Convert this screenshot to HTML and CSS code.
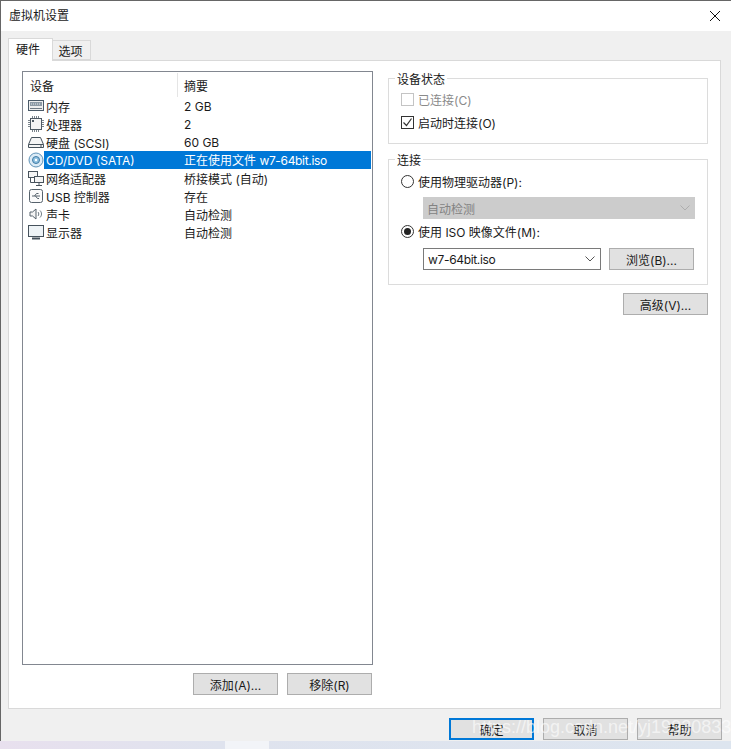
FILE: index.html
```html
<!DOCTYPE html>
<html lang="zh-CN">
<head>
<meta charset="utf-8">
<title>虚拟机设置</title>
<link rel="stylesheet" href="styles.css">
</head>
<body>
<div class="window">
  <header class="titlebar">
    <span class="title">虚拟机设置</span>
    <svg class="close" width="12" height="12" viewBox="0 0 12 12"><path d="M1 1l10 10M11 1L1 11" stroke="#111" stroke-width="1" fill="none"/></svg>
  </header>
  <main class="body">
    <div class="tabs">
      <div class="tab active">硬件</div>
      <div class="tab">选项</div>
    </div>
    <div class="panel">
      <section class="left">
        <div class="tree">
          <div class="tree-head">
            <div class="col-a">设备</div>
            <div class="col-b">摘要</div>
          </div>
          <div class="row">
            <svg class="ico" viewBox="0 0 16 16"><rect x=".5" y="2.500" width="15" height="10" fill="#eeeeee" stroke="#4a5a68"/><rect x="2" y="4" width="12" height="4" fill="#8d9aa5"/><path d="M3 6h10" stroke="#e4e8ec" stroke-dasharray="1 1"/><path d="M2 10.500h12" stroke="#6f7a84"/></svg>
            <div class="name">内存</div><div class="sum">2 GB</div>
          </div>
          <div class="row">
            <svg class="ico" viewBox="0 0 16 16"><path d="M0 4.500h16M0 6.500h16M0 8.500h16M0 10.500h16M4.500 0v16M6.500 0v16M8.500 0v16M10.500 0v16" stroke="#7b858d"/><rect x="2.500" y="2.500" width="11" height="11" fill="#f4f4f4" stroke="#4f5a64"/><rect x="4" y="4" width="2" height="2" fill="#4f5a64"/></svg>
            <div class="name">处理器</div><div class="sum">2</div>
          </div>
          <div class="row">
            <svg class="ico" viewBox="0 0 16 16"><path d="M3.500 3.500h9l3 7v3H.5v-3z" fill="#f5f5f5" stroke="#46525c"/><path d="M.5 10.500h15M12 12h2" stroke="#46525c"/></svg>
            <div class="name">硬盘 (SCSI)</div><div class="sum">60 GB</div>
          </div>
          <div class="row">
            <svg class="ico" viewBox="0 0 16 16"><circle cx="8" cy="8" r="7" fill="#dcebf6" stroke="#5f93b8"/><circle cx="8" cy="8" r="3.500" fill="#8fc0e0" stroke="#3f7ba5"/><circle cx="8" cy="8" r="1.200" fill="#fff"/></svg>
            <div class="selected"><div class="name">CD/DVD (SATA)</div><div class="sum">正在使用文件 <span class="iso">w7-64bit.iso</span></div></div>
          </div>
          <div class="row">
            <svg class="ico" viewBox="0 0 16 16"><rect x=".5" y="1.500" width="9" height="6" fill="#f3f3f3" stroke="#47525c"/><rect x="6.500" y="6.500" width="9" height="6" fill="#f3f3f3" stroke="#47525c"/><path d="M11 12.500v3M8 15.500h6M2.500 8v4.500h4" stroke="#47525c" fill="none"/></svg>
            <div class="name">网络适配器</div><div class="sum">桥接模式 (自动)</div>
          </div>
          <div class="row">
            <svg class="ico" viewBox="0 0 16 16"><rect x="1.500" y="1.500" width="13" height="13" rx="2" fill="#fbfbfb" stroke="#56626c"/><path d="M4 8h8M6.500 8l2-2.500h2M7.500 8l2 2.500h1.500" stroke="#56626c" fill="none"/></svg>
            <div class="name">USB 控制器</div><div class="sum">存在</div>
          </div>
          <div class="row">
            <svg class="ico" viewBox="0 0 16 14"><path d="M2 5h2.500L8 2v10L4.500 9H2z" fill="#f4f4f4" stroke="#56626c"/><path d="M10 5c1 1 1 3 0 4M12 3.500c2 2 2 5 0 7" stroke="#6c7780" fill="none"/></svg>
            <div class="name">声卡</div><div class="sum">自动检测</div>
          </div>
          <div class="row">
            <svg class="ico" viewBox="0 0 16 16"><rect x=".5" y="1.500" width="15" height="11" fill="#eef3f6" stroke="#46525c"/><path d="M4 14.500h8" stroke="#46525c" stroke-width="2"/></svg>
            <div class="name">显示器</div><div class="sum">自动检测</div>
          </div>
        </div>
        <div class="left-actions">
          <button class="btn">添加(A)...</button>
          <button class="btn">移除(R)</button>
        </div>
      </section>
      <section class="right">
        <fieldset class="group status">
          <legend>设备状态</legend>
          <div class="opt disabled"><span class="check off"></span>已连接(C)</div>
          <div class="opt">
            <span class="check"><svg width="11" height="11" viewBox="0 0 11 11"><path d="M1.500 5.500l3 3 5-7" stroke="#333" stroke-width="1.200" fill="none"/></svg></span>启动时连接(O)
          </div>
        </fieldset>
        <fieldset class="group conn">
          <legend>连接</legend>
          <div class="opt"><span class="radio"></span>使用物理驱动器(P):</div>
          <div class="combo off">
            <span>自动检测</span>
            <svg width="10" height="6" viewBox="0 0 10 6"><path d="M.5.500L5 5 9.500.500" stroke="#adadad" fill="none"/></svg>
          </div>
          <div class="opt"><span class="radio on"></span>使用 ISO 映像文件(M):</div>
          <div class="file-row">
            <div class="combo file">
              <span class="iso">w7-64bit.iso</span>
              <svg width="10" height="6" viewBox="0 0 10 6"><path d="M.5.500L5 5 9.500.500" stroke="#555" fill="none"/></svg>
            </div>
            <button class="btn browse">浏览(B)...</button>
          </div>
        </fieldset>
        <div class="adv-row"><button class="btn adv">高级(V)...</button></div>
      </section>
    </div>
    <footer class="actions">
      <button class="btn primary">确定</button>
      <button class="btn">取消</button>
      <button class="btn">帮助</button>
    </footer>
  </main>
  <div class="desktop"><span class="peek"></span></div>
  <div class="watermark">https://blog.csdn.net/yj19930833</div>
</div>
</body>
</html>
```

FILE: styles.css
```css
* { box-sizing: border-box; }
html, body { margin: 0; height: 100%; overflow: hidden; }
body {
  font-family: Inter, "Noto Sans CJK SC", sans-serif;
  font-size: 12px;
  color: #1a1a1a;
  background: #dde5ef;
}
.window {
  position: relative;
  width: 731px;
  height: 749px;
  display: flex;
  flex-direction: column;
  overflow: hidden;
}
.titlebar {
  height: 31px;
  flex: none;
  background: #fff;
  border-top: 1px solid #666;
  border-left: 1px solid #666;
  display: flex;
  align-items: center;
  justify-content: space-between;
  padding: 0 10px 0 8px;
}
.title { line-height: 30px; }
.body {
  height: 710px;
  flex: none;
  background: #f0f0f0;
  border-left: 1px solid #666;
  padding: 7px 10px 0 7px;
  display: flex;
  flex-direction: column;
}
.tabs { display: flex; align-items: flex-end; height: 22px; flex: none; position: relative; z-index: 1; }
.tab {
  width: 38px;
  height: 20px;
  line-height: 21px;
  padding-right: 2px;
  text-align: center;
  background: #f0f0f0;
  border: 1px solid #d9d9d9;
  border-left: 0;
}
.tab.active {
  width: 45px;
  height: 23px;
  margin-bottom: -1px;
  padding: 0 0 0 7px;
  line-height: 21px;
  text-align: left;
  background: #fff;
  border: 1px solid #d9d9d9;
  border-bottom: 0;
}
.panel {
  height: 649px;
  flex: none;
  background: #fff;
  border: 1px solid #d9d9d9;
  padding: 10px 11px 14px 13px;
  display: flex;
  gap: 15px;
}
.left { width: 351px; flex: none; display: flex; flex-direction: column; }
.tree {
  height: 594px;
  flex: none;
  border: 1px solid #828790;
  padding: 1px;
}
.tree-head { display: flex; height: 24px; line-height: 28px; }
.col-a { width: 154px; padding-left: 6px; border-right: 1px solid #e5e5e5; }
.col-b { padding-left: 6px; }
.row { display: flex; align-items: center; height: 18px; padding-left: 4px; }
.ico { width: 16px; height: 16px; flex: none; }
.name { width: 134px; flex: none; padding-left: 2px; white-space: nowrap; }
.sum { white-space: nowrap; padding-left: 6px; }
.iso { letter-spacing: -.33px; }
.selected { display: flex; flex: 1; height: 18px; line-height: 19px; background: #0078d7; color: #fff; }
.left-actions { display: flex; justify-content: flex-end; gap: 9px; margin-top: 8px; padding-right: 1px; }
.btn {
  width: 85px;
  height: 22px;
  padding: 0;
  background: #e1e1e1;
  border: 1px solid #adadad;
  font: inherit;
  color: inherit;
}
.right { width: 320px; flex: none; display: flex; flex-direction: column; }
.group {
  margin: 0;
  border: 1px solid #dcdcdc;
  padding: 0 12px;
  min-width: 0;
}
legend { padding: 4px 2px 0 2px; margin-left: -6px; line-height: 16px; }
.status { height: 76px; margin-top: -3px; }
.conn { height: 136px; margin-top: 5px; }
.opt { display: flex; align-items: center; height: 18px; white-space: nowrap; }
.status .opt { margin-bottom: 5px; }
.status .opt:first-of-type { margin-top: 2px; }
.conn .opt:first-of-type { margin-top: 3px; }
.check {
  width: 13px;
  height: 13px;
  flex: none;
  margin-right: 4px;
  border: 1px solid #333;
  background: #fff;
  display: flex;
  align-items: center;
  justify-content: center;
}
.check.off { border-color: #c4c4c4; }
.disabled { color: #8a8a8a; }
.radio {
  width: 13px;
  height: 13px;
  flex: none;
  margin-right: 4px;
  border: 1px solid #333;
  border-radius: 50%;
  background: #fff;
  display: flex;
  align-items: center;
  justify-content: center;
}
.radio.on::before {
  content: "";
  width: 7px;
  height: 7px;
  border-radius: 50%;
  background: #222;
}
.combo {
  display: flex;
  align-items: center;
  justify-content: space-between;
  height: 22px;
  padding: 0 5px 0 4px;
}
.combo.off {
  width: 272px;
  margin: 7px 0 3px 22px;
  background: #cccccc;
  color: #838383;
}
.combo.file {
  width: 178px;
  border: 1px solid #7a7a7a;
  background: #fff;
}
.file-row { display: flex; gap: 8px; margin: 8px 0 0 22px; }
.browse { width: 85px; }
.adv-row { display: flex; justify-content: flex-end; margin-top: 8px; }
.actions { display: flex; justify-content: flex-end; gap: 9px; margin: 9px -1px 0 0; }
.primary { border: 2px solid #0078d7; }
.desktop { flex: 1; position: relative; background: linear-gradient(90deg, #e8e0ee 0%, #dfe3ee 30%, #dde5ef 100%); }
.peek { position: absolute; left: 225px; top: 0; width: 44px; height: 8px; background: #f2f4f8; }
.watermark {
  position: absolute;
  left: 472px;
  top: 717px;
  font: 18px "Liberation Sans", sans-serif;
  color: rgba(255, 255, 255, .6);
  white-space: nowrap;
}
```
